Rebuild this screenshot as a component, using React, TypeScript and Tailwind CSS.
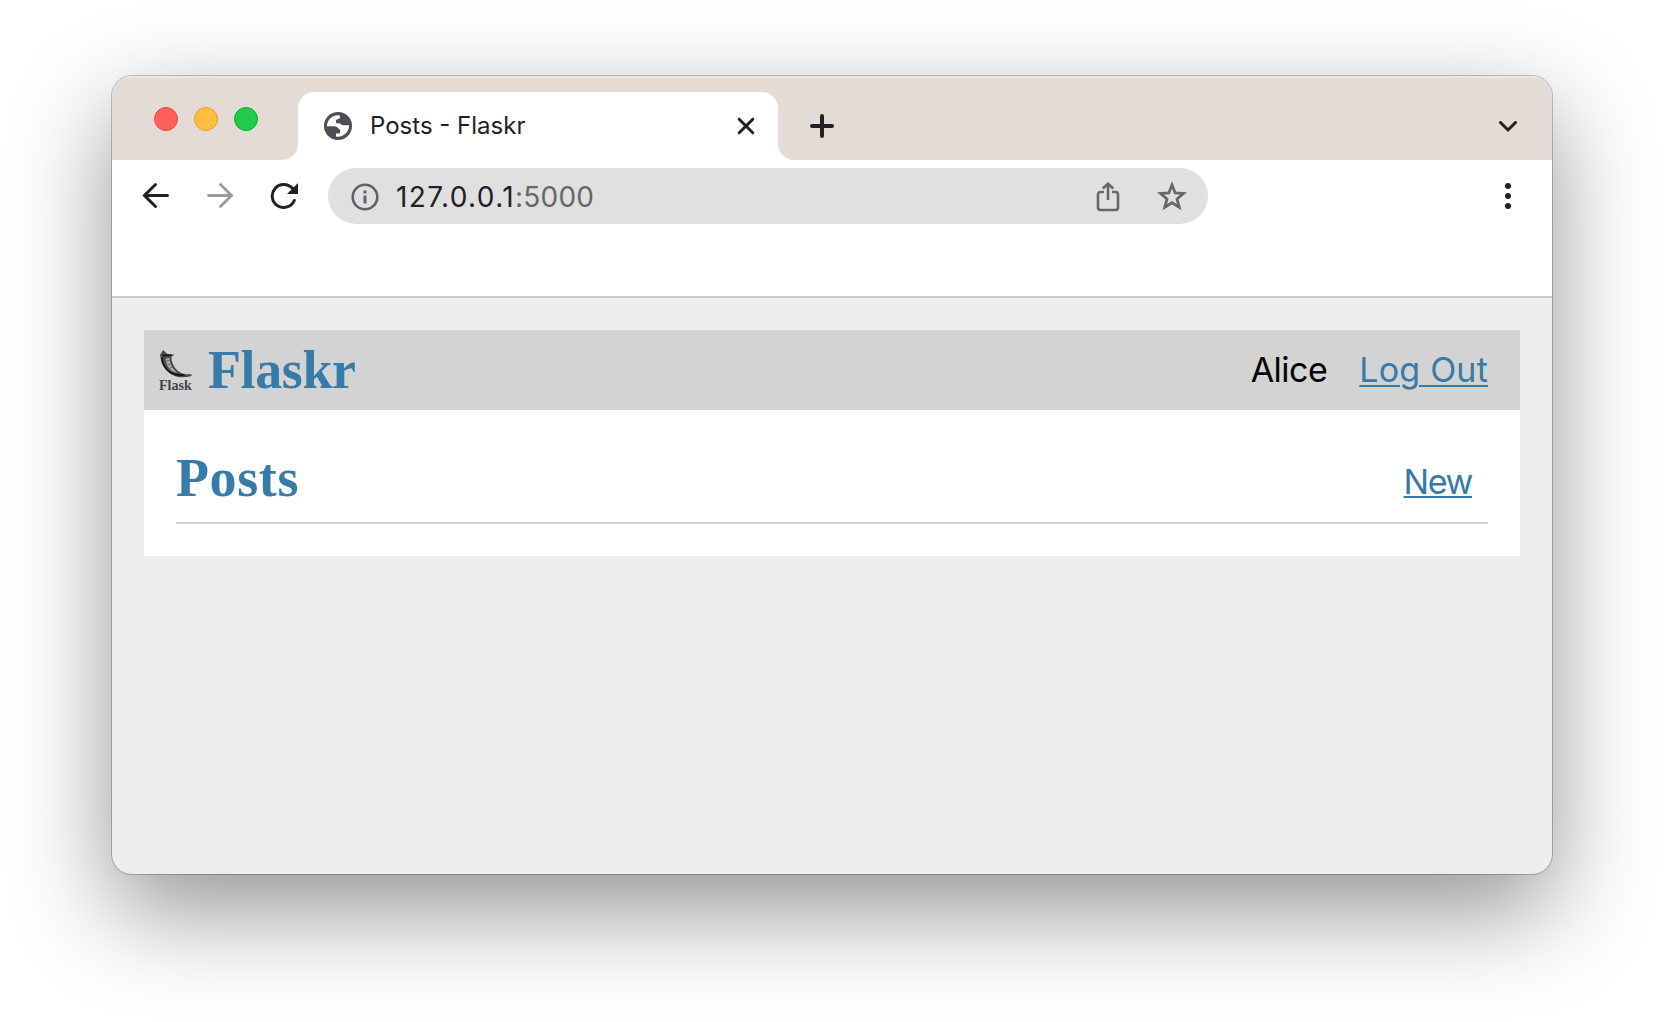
function Globe() {
  return (
    <svg className="h-7 w-7 shrink-0" viewBox="0 0 28 28">
      <circle cx="14" cy="14" r="14" fill="#4c4f54" />
      <path d="M3 14.2C3 8.5 7.200 3.500 14 3.200L16 3.400V6c-1 1-3 1-4 2v3.200h2.800c2 0 2.600 2 4.600 2H25c0.100 0.400 0 1.200 0 1.600-0.800 5.600-5.500 10-11 10-0.700 0-1.500-0.100-2-0.200V21.500H15.600c1.500-3 0.200-4-1-5C13 14.600 12 14.200 9 14.200Z" fill="#fff" />
    </svg>
  );
}

function FlaskLogo() {
  return (
    <div className="-ml-px flex h-[42px] w-[33px] shrink-0 flex-col items-start">
      <svg className="h-[30px] w-[33px] shrink-0" viewBox="0 0 32 30" fill="none">
        <path d="M0.500 6 3.500 1l4.500 4 7 .8-3 2c-.5 5 3 11.500 7 14.500 3.500 2.700 7 3.200 13 3v1.800c-7 2-14 1.700-19-1.300C5 21.500 1.200 14.500 1 8Z" fill="#4a4a4a" />
        <path d="M6 9.500c1 0 2.500-.8 4-.8 .2 6 3.500 12 8 15-4-.5-6.500-2-8.500-4.500C7.500 16.500 6.200 13 6 9.500Z" fill="#aaa" />
        <path d="M3 6.500 12 6M2.500 8.500c.5 6 3 11 7.500 14.500 4 2.500 9 3.500 15 3" stroke="#111" strokeWidth="1.500" />
        <path d="M6 12.500l4.500-1.500M7 16.500l4.500-2M9.500 20l4-2.500" stroke="#666" />
      </svg>
      <span className="-mt-px font-['Liberation_Serif',serif] text-[14px] leading-[15px] font-bold text-[#444]">Flask</span>
    </div>
  );
}

export default function App() {
  return (
    <div className="flex h-[1022px] w-[1664px] overflow-hidden bg-white pl-28 pt-[76px] font-['Inter',sans-serif]">
      <div className="flex h-[798px] w-[1440px] flex-col overflow-hidden rounded-[20px] bg-[#eeeeee] shadow-[0_0_0_1px_rgba(0,0,0,0.22),0_36px_100px_rgba(0,0,0,0.43)]">
        <div className="flex h-21 shrink-0 bg-[#e4dbd6] shadow-[inset_0_2px_0_#eee8e5]">
          <div className="flex w-[186px] shrink-0 pl-[42px] pt-[31px]">
            <div className="flex gap-4">
              <div className="size-6 rounded-full border border-[#e24b41] bg-[#ff6057]" />
              <div className="size-6 rounded-full border border-[#e1a325] bg-[#ffbd3e]" />
              <div className="size-6 rounded-full border border-[#12ac28] bg-[#1fca4c]" />
            </div>
          </div>
          <svg className="-ml-4 h-4 w-4 shrink-0 self-end" viewBox="0 0 16 16"><path d="M16 0v16H0A16 16 0 0 0 16 0Z" fill="#fff" /></svg>
          <div className="mt-4 flex w-[480px] shrink-0 items-center rounded-t-2xl bg-white pl-[26px] pr-[23px]">
            <Globe />
            <span className="ml-[18px] grow text-2xl text-[#202124]">Posts - Flaskr</span>
            <svg className="h-[18px] w-[18px]" viewBox="0 0 18 18" stroke="#202124" strokeWidth="3" strokeLinecap="round"><path d="M2.200 2.200 15.800 15.800M15.800 2.200 2.200 15.800" /></svg>
          </div>
          <svg className="h-4 w-4 shrink-0 self-end" viewBox="0 0 16 16"><path d="M0 0v16H16A16 16 0 0 1 0 0Z" fill="#fff" /></svg>
          <svg className="ml-4 mt-[38px] h-6 w-6" viewBox="0 0 24 24" stroke="#202124" strokeWidth="4" strokeLinecap="round"><path d="M12 2v20M2 12h20" /></svg>
          <svg className="ml-auto mr-[35px] mt-[45px] h-3 w-[18px]" viewBox="0 0 18 12" fill="none" stroke="#202124" strokeWidth="3" strokeLinecap="round"><path d="M1.500 1.500 9 9 16.500 1.500" /></svg>
        </div>
        <div className="flex h-[138px] shrink-0 border-b-2 border-[#cbcbcb] bg-white pt-2">
          <div className="flex h-14 w-full items-center pl-[30px]">
            <svg className="h-7 w-7" viewBox="0 0 28 28" fill="none" stroke="#202124" strokeWidth="3" strokeLinecap="round"><path d="M3 13.500H25.500M13.500 2.500 2.500 13.500 13.500 24.500" /></svg>
            <svg className="ml-9 h-7 w-7" viewBox="0 0 28 28" fill="none" stroke="#9a9a9a" strokeWidth="2.800" strokeLinecap="round"><path d="M2.500 13.500H25M14.500 2.500 25.500 13.500 14.500 24.500" /></svg>
            <svg className="ml-9 h-7 w-7" viewBox="0 0 28 28" fill="none"><path d="M24.300 18.500A11.500 11.500 0 1 1 22.500 6.500" stroke="#202124" strokeWidth="3" strokeLinecap="round" /><path d="M28 1V12H17Z" fill="#202124" /></svg>
            <div className="ml-[30px] flex h-14 w-[880px] items-center rounded-full bg-[#e0e0e0] pl-[22px] pr-[21px]">
              <svg className="ml-[0.5px] mt-px h-7 w-7" viewBox="0 0 28 28"><circle cx="14" cy="14" r="12.300" fill="none" stroke="#5f6368" strokeWidth="2.600" /><path d="M12.500 7.500h3v3h-3zM12.500 12.500h3v8h-3z" fill="#5f6368" /></svg>
              <span className="ml-[17.5px] mt-px grow text-[28px] tracking-[1.400px] text-[#202124]">127.0.0.1<span className="tracking-[0.200px] text-[#65676b]">:5000</span></span>
              <svg className="mr-[-1px] mt-px h-[30px] w-6" viewBox="0 0 24 30" fill="none" stroke="#65676a" strokeWidth="2.600"><path d="M8 10H4.500Q2 10 2 12.500V25.500Q2 28 4.500 28H19.500Q22 28 22 25.500V12.500Q22 10 19.500 10H16M12 18V2M6.800 6.500 12 1.800 17.200 6.500" /></svg>
              <svg className="ml-[38px] h-[30px] w-[30px]" viewBox="0 0 30 30" fill="none" stroke="#65676a" strokeWidth="2.800"><path d="M15 4 18.200 12 26.500 12.500 20 18 22.200 26.200 15 21.700 7.800 26.200 10 18 3.500 12.500 11.800 12Z" /></svg>
            </div>
            <svg className="ml-auto mr-[41px] h-[26px] w-[6px]" viewBox="0 0 6 26" fill="#202124"><circle cx="3" cy="3" r="3" /><circle cx="3" cy="13" r="3" /><circle cx="3" cy="23" r="3" /></svg>
          </div>
        </div>
        <div className="px-8 pt-8">
          <nav className="flex h-20 items-center bg-[#d3d3d3] pl-4 pr-8 text-[34px] font-normal">
            <FlaskLogo />
            <h1 className="ml-4 grow font-['Liberation_Serif',serif] text-[54px] leading-none font-bold tracking-[-0.4px] text-[#377ba8]">Flaskr</h1>
            <span className="-mt-0.5 tracking-[-0.5px] text-black">Alice</span>
            <a className="-mt-0.5 ml-8 tracking-[0.200px] text-[#377ba8] underline decoration-2 underline-offset-[3px]">Log Out</a>
          </nav>
          <section className="h-[146px] bg-white px-8">
            <header className="flex h-[114px] items-center border-b-2 border-[#d3d3d3] pr-4 pt-6">
              <h1 className="grow font-['Liberation_Serif',serif] text-[54px] leading-none font-bold tracking-[0.6px] text-[#377ba8]">Posts</h1>
              <a className="mt-1.5 text-[34px] font-normal tracking-[-1.400px] text-[#377ba8] underline decoration-2 underline-offset-[2px]">New</a>
            </header>
          </section>
        </div>
      </div>
    </div>
  );
}
